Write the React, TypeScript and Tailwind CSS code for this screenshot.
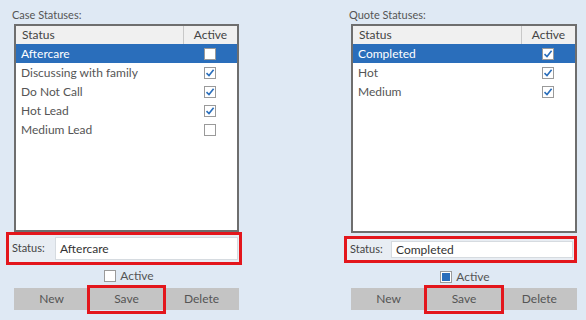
import React from "react";

type Row = { name: string; active: boolean };

const font = { fontFamily: "Lato, 'Open Sans', sans-serif" };

const CheckBox = ({ checked, fill }: { checked?: boolean; fill?: boolean }) => (
  <span className="inline-flex h-[12px] w-[12px] items-center justify-center border border-[#9a9a9a] bg-white">
    {checked && (
      <svg width="10" height="10" viewBox="0 0 10 10">
        <path d="M1.5 5.2 L4 7.6 L8.6 1.8" fill="none" stroke="#2a6ebb" strokeWidth="1.6" />
      </svg>
    )}
    {fill && <span className="h-[8px] w-[8px] bg-[#2a6ebb]" />}
  </span>
);

const ListBox = ({ rows, width, height, colWidth }: { rows: Row[]; width: number; height: number; colWidth: number }) => (
  <div className="border-2 border-[#6e6e6e] bg-white" style={{ width, height }}>
    <div className="flex h-[18px] bg-[#f0f0f0] text-[12px] text-[#444]">
      <div className="flex-1 pl-[6px] leading-[18px]">Status</div>
      <div className="border-l border-[#c8c8c8] text-center leading-[18px]" style={{ width: colWidth }}>
        Active
      </div>
    </div>
    {rows.map((r, i) => (
      <div
        key={r.name}
        className={`flex h-[19px] items-center text-[12px] ${i === 0 ? "bg-[#2a6ebb] text-white" : "text-[#555]"}`}
      >
        <div className="flex-1 pl-[5px]">{r.name}</div>
        <div className="flex justify-center" style={{ width: colWidth }}>
          <CheckBox checked={r.active} />
        </div>
      </div>
    ))}
  </div>
);

const Panel = ({
  title,
  rows,
  value,
  inset,
  listWidth,
  listHeight,
  boxGap,
  boxHeight,
  labelWidth,
  activeGap,
  buttonGap,
  activeFill,
}: {
  title: string;
  rows: Row[];
  value: string;
  inset: number;
  listWidth: number;
  listHeight: number;
  boxGap: number;
  boxHeight: number;
  labelWidth: number;
  activeGap: number;
  buttonGap: number;
  activeFill?: boolean;
}) => (
  <div className="flex flex-col">
    <div className="pt-[8px] text-[11px] leading-[14px] text-[#555]" style={{ paddingLeft: inset - 2 }}>
      {title}
    </div>
    <div className="mt-[2px]" style={{ paddingLeft: inset }}>
      <ListBox rows={rows} width={listWidth} height={listHeight} colWidth={54} />
    </div>
    <div
      className="flex items-stretch border-[3px] border-[#e3161c] bg-[#e8edf3]"
      style={{ height: boxHeight, marginTop: boxGap }}
    >
      <div className="flex items-center pl-[3px] text-[11px] text-[#444]" style={{ width: labelWidth }}>
        Status:
      </div>
      <div className="my-[2px] mr-[1px] flex flex-1 items-center border border-[#d6dbe0] bg-white pl-[4px] text-[12px] text-[#333]">
        {value}
      </div>
    </div>
    <div
      className="flex items-center justify-center gap-[4px] text-[12px] leading-[14px] text-[#555]"
      style={{ paddingLeft: inset + 2, marginTop: activeGap }}
    >
      <CheckBox fill={activeFill} />
      <span>Active</span>
    </div>
    <div
      className="flex h-[22px] text-[12px] text-[#555]"
      style={{ marginLeft: inset, width: listWidth, marginTop: buttonGap }}
    >
      <button className="flex-1 bg-[#c4c4c4]">New</button>
      <button className="relative flex-1 bg-[#c4c4c4]">
        Save
        <span className="absolute -top-[3px] -bottom-[4px] -left-[2px] -right-[2px] border-[3px] border-[#e3161c]" />
      </button>
      <button className="flex-1 bg-[#c4c4c4]">Delete</button>
    </div>
  </div>
);

export default function App() {
  return (
    <div className="flex h-[320px] w-[586px] bg-[#dfe9f4]" style={font}>
      <div className="ml-[6px] w-[236px]">
        <Panel
          title="Case Statuses:"
          rows={[
            { name: "Aftercare", active: false },
            { name: "Discussing with family", active: true },
            { name: "Do Not Call", active: true },
            { name: "Hot Lead", active: true },
            { name: "Medium Lead", active: false },
          ]}
          value="Aftercare"
          inset={8}
          listWidth={225}
          listHeight={208}
          boxGap={0}
          boxHeight={33}
          labelWidth={46}
          activeGap={4}
          buttonGap={5}
        />
      </div>
      <div className="ml-[102px] w-[233px]">
        <Panel
          title="Quote Statuses:"
          rows={[
            { name: "Completed", active: true },
            { name: "Hot", active: true },
            { name: "Medium", active: true },
          ]}
          value="Completed"
          inset={7}
          listWidth={226}
          listHeight={209}
          boxGap={3}
          boxHeight={27}
          labelWidth={44}
          activeGap={7}
          buttonGap={4}
          activeFill
        />
      </div>
    </div>
  );
}
